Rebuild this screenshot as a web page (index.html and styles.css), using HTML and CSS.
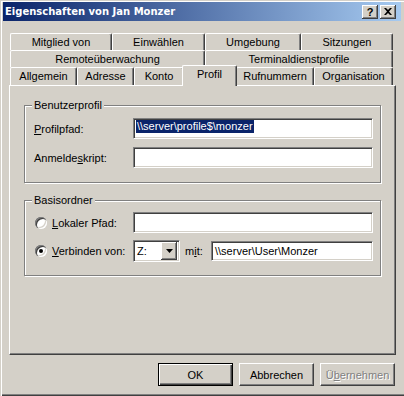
FILE: index.html
```html
<!DOCTYPE html>
<html lang="de">
<head>
    <meta charset="UTF-8">
    <title>Eigenschaften von Jan Monzer</title>
    <link rel="stylesheet" href="styles.css">
</head>
<body>
    <div class="window">
        <!-- Title bar -->
        <div class="titlebar">
            <span class="title">Eigenschaften von Jan Monzer</span>
            <div class="caption-btns">
                <button class="caption-btn help">?</button>
                <button class="caption-btn">
                    <svg width="8" height="7" viewBox="0 0 8 7"><path d="M0 0h2l2 2 2-2h2L5 3.5 8 7H6L4 5 2 7H0l3-3.5z" fill="#000"/></svg>
                </button>
            </div>
        </div>

        <!-- Tabs -->
        <div class="tabs">
            <div class="tab-row row-1">
                <div class="tab">Mitglied von</div>
                <div class="tab">Einwählen</div>
                <div class="tab">Umgebung</div>
                <div class="tab">Sitzungen</div>
            </div>
            <div class="tab-row row-2">
                <div class="tab">Remoteüberwachung</div>
                <div class="tab">Terminaldienstprofile</div>
            </div>
            <div class="tab-row row-3">
                <div class="tab">Allgemein</div>
                <div class="tab">Adresse</div>
                <div class="tab">Konto</div>
                <div class="tab active">Profil</div>
                <div class="tab">Rufnummern</div>
                <div class="tab">Organisation</div>
            </div>

            <div class="tab-panel">
                <fieldset class="group">
                    <legend>Benutzerprofil</legend>
                    <div class="group-body">
                        <div class="field-row">
                            <span class="field-label"><u>P</u>rofilpfad:</span>
                            <div class="edit"><span class="selected">\\server\profile$\monzer</span></div>
                        </div>
                        <div class="field-row">
                            <span class="field-label">Anmelde<u>s</u>kript:</span>
                            <div class="edit"></div>
                        </div>
                    </div>
                </fieldset>

                <fieldset class="group group-home">
                    <legend>Basisordner</legend>
                    <div class="group-body home-body">
                        <div class="field-row">
                            <span class="field-label radio-label"><span class="radio"></span><span><u>L</u>okaler Pfad:</span></span>
                            <div class="edit"></div>
                        </div>
                        <div class="field-row row-connect">
                            <span class="field-label radio-label"><span class="radio checked"></span><span><u>V</u>erbinden von:</span></span>
                            <div class="combo">
                                <span class="combo-value">Z:</span>
                                <span class="combo-btn">
                                    <svg width="7" height="4" viewBox="0 0 7 4"><path d="M0 0h7L3.5 4z" fill="#000"/></svg>
                                </span>
                            </div>
                            <span class="mit-label">m<u>i</u>t:</span>
                            <div class="edit edit-short"><span class="edit-text">\\server\User\Monzer</span></div>
                        </div>
                    </div>
                </fieldset>
            </div>
        </div>

        <!-- Dialog buttons -->
        <div class="dialog-buttons">
            <button class="btn btn-default">OK</button>
            <button class="btn">Abbrechen</button>
            <button class="btn" disabled>Ü<u>b</u>ernehmen</button>
        </div>
    </div>
</body>
</html>
```

FILE: styles.css
```css
* {
    margin: 0;
    padding: 0;
    box-sizing: border-box;
}

body {
    background-color: #d4d0c8;
    font-family: "Liberation Sans", Arial, sans-serif;
    font-size: 11px;
    color: #000;
}

/* Window frame */
.window {
    width: 404px;
    height: 396px;
    display: flex;
    flex-direction: column;
    overflow: hidden;
    box-shadow: inset 1px 1px #d4d0c8, inset 2px 2px #fff,
                inset 0 -1px #404040, inset 0 -2px #808080;
}

.titlebar {
    margin: 2px 3px 0 3px;
    height: 19px;
    padding: 0 5px 0 2px;
    display: flex;
    align-items: center;
    justify-content: space-between;
    background: linear-gradient(to right, #0a246a, #a6caf0);
}

.title {
    color: #fff;
    font-family: "DejaVu Sans", sans-serif;
    font-weight: bold;
    font-size: 10px;
}

.caption-btns {
    display: flex;
    gap: 2px;
}

.caption-btn {
    width: 16px;
    height: 14px;
    border: none;
    background-color: #d4d0c8;
    box-shadow: inset -1px -1px #404040, inset 1px 1px #fff,
                inset -2px -2px #808080;
    display: flex;
    align-items: center;
    justify-content: center;
    font-family: "Liberation Sans", Arial, sans-serif;
    font-weight: bold;
    font-size: 11px;
    line-height: 12px;
    color: #000;
}

.caption-btn svg {
    margin-top: -1px;
}

/* Tab control */
.tabs {
    margin: 12px 0 0 9px;
    width: 387px;
}

.tab-row {
    display: grid;
    height: 17px;
    padding: 0 3px 0 1px;
}

.row-1 {
    grid-template-columns: 102px 93px 96px 1fr;
}

.row-2 {
    grid-template-columns: 195px 1fr;
}

.row-3 {
    grid-template-columns: 67px 57px 50px 52px 78px 1fr;
    height: 18px;
}

.tab {
    border-top: 1px solid #fff;
    border-left: 1px solid #fff;
    border-right: 1px solid #404040;
    border-radius: 2px 2px 0 0;
    box-shadow: inset -1px 0 #808080;
    background-color: #d4d0c8;
    text-align: center;
    line-height: 16px;
    white-space: nowrap;
}

.tab.active {
    position: relative;
    z-index: 1;
    margin: -2px -1px -1px -2px;
}

.tab-panel {
    height: 270px;
    border: 1px solid;
    border-color: #fff #404040 #404040 #fff;
    box-shadow: inset -1px -1px #808080;
    padding: 13px 14px 0 14px;
}

/* Group boxes */
.group {
    border: 1px solid #808080;
    box-shadow: inset 1px 1px #fff, 1px 1px #fff;
    padding: 6px 7px 14px 9px;
}

.group legend {
    margin-left: -2px;
    padding: 0 2px;
    line-height: 13px;
    background-color: #d4d0c8;
}

.group-home {
    margin-top: 11px;
    padding-top: 5px;
    padding-bottom: 13px;
}

.group-body {
    display: flex;
    flex-direction: column;
    gap: 8px;
}

.home-body {
    gap: 7px;
}

.field-row {
    display: flex;
    align-items: center;
    height: 21px;
}

.row-connect {
    height: 22px;
}

.field-label {
    width: 99px;
    flex-shrink: 0;
    white-space: nowrap;
}

.radio-label {
    display: flex;
    align-items: center;
    gap: 5px;
    padding-left: 1px;
}

.radio {
    width: 12px;
    height: 12px;
    border-radius: 50%;
    background-color: #fff;
    box-shadow: inset 1px 1px #808080, inset 2px 2px #404040,
                inset -1px -1px #fff, inset -2px -2px #d4d0c8;
    display: grid;
    place-items: center;
}

.radio.checked::after {
    content: "";
    width: 4px;
    height: 4px;
    border-radius: 50%;
    background-color: #000;
}

/* Edit fields */
.edit {
    width: 240px;
    height: 21px;
    background-color: #fff;
    border: 1px solid;
    border-color: #808080 #fff #fff #808080;
    box-shadow: inset 1px 1px #404040, inset -1px -1px #d4d0c8;
    padding: 1px 2px 0 2px;
    line-height: 13px;
    white-space: nowrap;
    overflow: hidden;
}

.selected {
    display: inline-block;
    background-color: #0a246a;
    color: #fff;
    padding: 0 1px;
}

.edit-text {
    display: inline-block;
    padding: 2px 1px 0 1px;
}

.edit-short {
    width: 162px;
    height: 20px;
    margin-left: auto;
}

.combo {
    width: 47px;
    height: 22px;
    display: flex;
    align-items: center;
    justify-content: space-between;
    background-color: #fff;
    border: 1px solid;
    border-color: #808080 #fff #fff #808080;
    box-shadow: inset 1px 1px #404040, inset -1px -1px #d4d0c8;
    padding: 2px 2px 2px 3px;
}

.combo-btn {
    width: 16px;
    height: 18px;
    background-color: #d4d0c8;
    box-shadow: inset -1px -1px #404040, inset 1px 1px #fff,
                inset -2px -2px #808080;
    display: flex;
    align-items: center;
    justify-content: center;
}

.mit-label {
    margin-left: 5px;
}

/* Dialog buttons */
.dialog-buttons {
    display: flex;
    justify-content: flex-end;
    gap: 6px;
    margin-top: 8px;
    padding-right: 9px;
}

.btn {
    width: 75px;
    height: 23px;
    background-color: #d4d0c8;
    border: 1px solid;
    border-color: #fff #404040 #404040 #fff;
    box-shadow: inset -1px -1px #808080;
    font-family: "Liberation Sans", Arial, sans-serif;
    font-size: 11px;
    color: #000;
}

.btn-default {
    border-color: #000;
    box-shadow: inset 1px 1px #fff, inset -1px -1px #404040,
                inset -2px -2px #808080;
}

.btn:disabled {
    color: #808080;
    text-shadow: 1px 1px #fff;
}
```
